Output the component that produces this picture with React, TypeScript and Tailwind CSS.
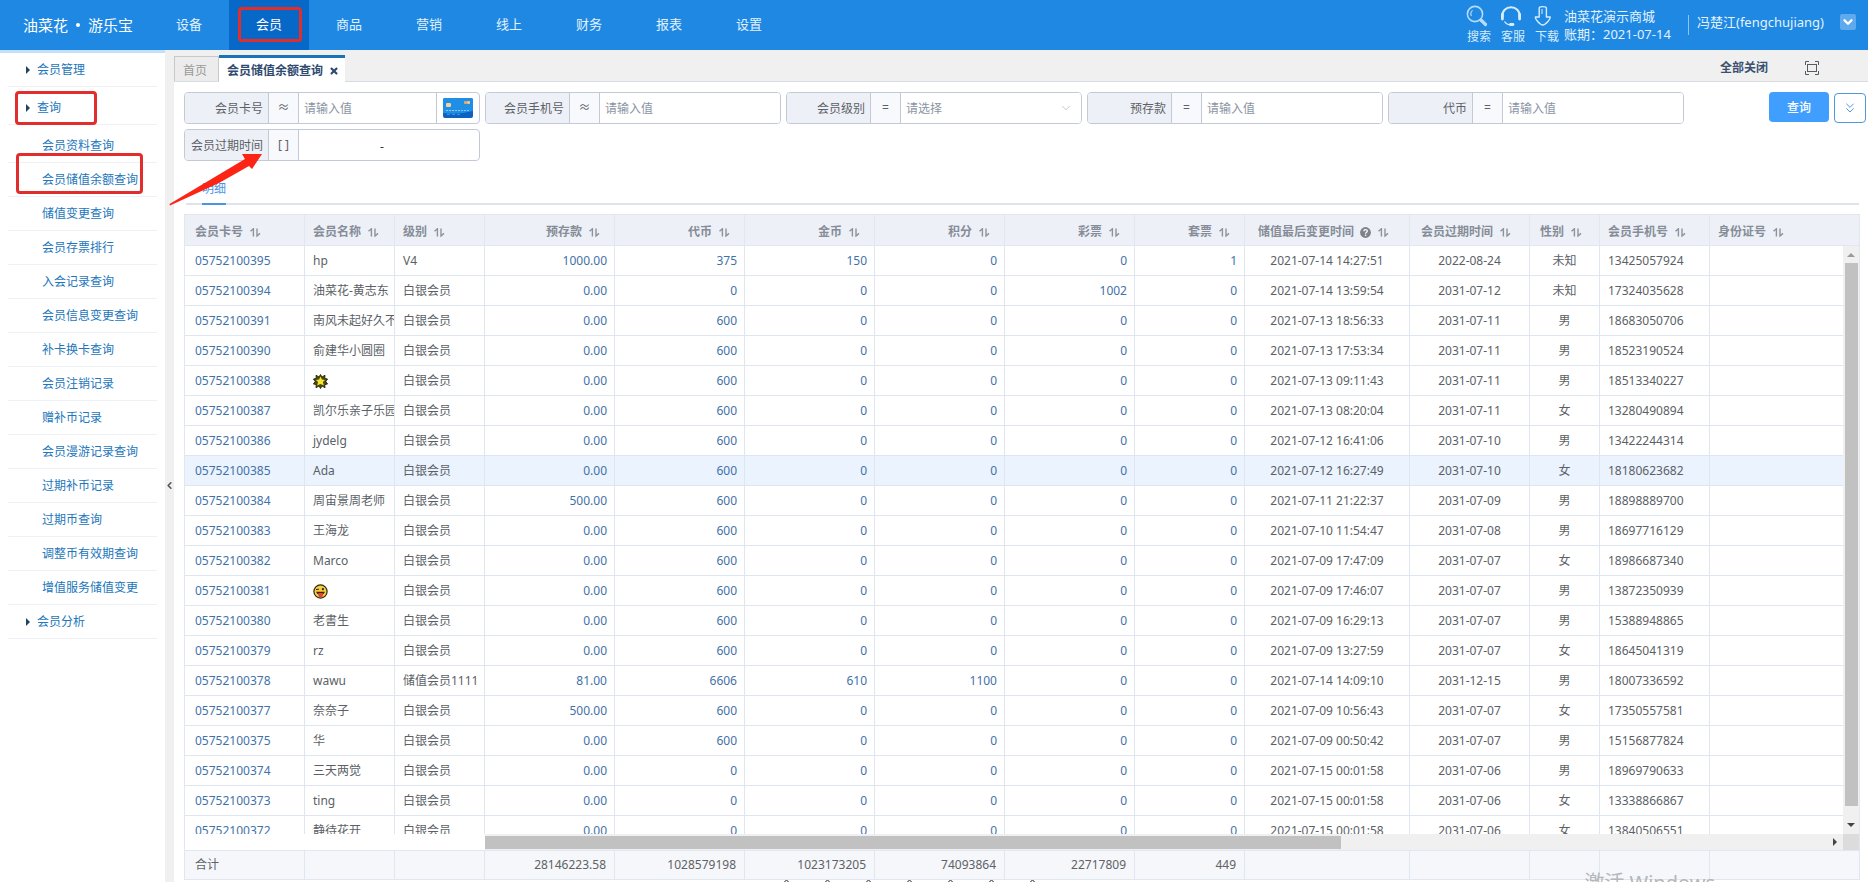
import React from 'react';
import { clsx } from 'clsx';
import { ChevronDown, ChevronLeft, ChevronsDown, X } from 'lucide-react';

type Align = 'left' | 'center' | 'right';

interface Column {
  title: string;
  align: Align;
  link?: boolean;
  help?: boolean;
  total?: string;
}

const NAV = ['设备', '会员', '商品', '营销', '线上', '财务', '报表', '设置'];

const QUERY_MENU = [
  '会员资料查询',
  '会员储值余额查询',
  '储值变更查询',
  '会员存票排行',
  '入会记录查询',
  '会员信息变更查询',
  '补卡换卡查询',
  '会员注销记录',
  '赠补币记录',
  '会员漫游记录查询',
  '过期补币记录',
  '过期币查询',
  '调整币有效期查询',
  '增值服务储值变更',
];

const COLUMNS: Column[] = [
  { title: '会员卡号', align: 'left', link: true, total: '合计' },
  { title: '会员名称', align: 'left' },
  { title: '级别', align: 'left' },
  { title: '预存款', align: 'right', link: true, total: '28146223.58' },
  { title: '代币', align: 'right', link: true, total: '1028579198' },
  { title: '金币', align: 'right', link: true, total: '1023173205' },
  { title: '积分', align: 'right', link: true, total: '74093864' },
  { title: '彩票', align: 'right', link: true, total: '22717809' },
  { title: '套票', align: 'right', link: true, total: '449' },
  { title: '储值最后变更时间', align: 'center', help: true },
  { title: '会员过期时间', align: 'center' },
  { title: '性别', align: 'center' },
  { title: '会员手机号', align: 'left' },
  { title: '身份证号', align: 'left' },
];

const L = '白银会员';

const ROWS: string[][] = [
  ['05752100395', 'hp', 'V4', '1000.00', '375', '150', '0', '0', '1', '2021-07-14 14:27:51', '2022-08-24', '未知', '13425057924'],
  ['05752100394', '油菜花-黄志东', L, '0.00', '0', '0', '0', '1002', '0', '2021-07-14 13:59:54', '2031-07-12', '未知', '17324035628'],
  ['05752100391', '南风未起好久不', L, '0.00', '600', '0', '0', '0', '0', '2021-07-13 18:56:33', '2031-07-11', '男', '18683050706'],
  ['05752100390', '俞建华小圆圈', L, '0.00', '600', '0', '0', '0', '0', '2021-07-13 17:53:34', '2031-07-11', '男', '18523190524'],
  ['05752100388', ':burst:', L, '0.00', '600', '0', '0', '0', '0', '2021-07-13 09:11:43', '2031-07-11', '男', '18513340227'],
  ['05752100387', '凯尔乐亲子乐园', L, '0.00', '600', '0', '0', '0', '0', '2021-07-13 08:20:04', '2031-07-11', '女', '13280490894'],
  ['05752100386', 'jydelg', L, '0.00', '600', '0', '0', '0', '0', '2021-07-12 16:41:06', '2031-07-10', '男', '13422244314'],
  ['05752100385', 'Ada', L, '0.00', '600', '0', '0', '0', '0', '2021-07-12 16:27:49', '2031-07-10', '女', '18180623682'],
  ['05752100384', '周宙景周老师', L, '500.00', '600', '0', '0', '0', '0', '2021-07-11 21:22:37', '2031-07-09', '男', '18898889700'],
  ['05752100383', '王海龙', L, '0.00', '600', '0', '0', '0', '0', '2021-07-10 11:54:47', '2031-07-08', '男', '18697716129'],
  ['05752100382', 'Marco', L, '0.00', '600', '0', '0', '0', '0', '2021-07-09 17:47:09', '2031-07-07', '女', '18986687340'],
  ['05752100381', ':wink:', L, '0.00', '600', '0', '0', '0', '0', '2021-07-09 17:46:07', '2031-07-07', '男', '13872350939'],
  ['05752100380', '老書生', L, '0.00', '600', '0', '0', '0', '0', '2021-07-09 16:29:13', '2031-07-07', '男', '15388948865'],
  ['05752100379', 'rz', L, '0.00', '600', '0', '0', '0', '0', '2021-07-09 13:27:59', '2031-07-07', '女', '18645041319'],
  ['05752100378', 'wawu', '储值会员1111', '81.00', '6606', '610', '1100', '0', '0', '2021-07-14 14:09:10', '2031-12-15', '男', '18007336592'],
  ['05752100377', '奈奈子', L, '500.00', '600', '0', '0', '0', '0', '2021-07-09 10:56:43', '2031-07-07', '女', '17350557581'],
  ['05752100375', '华', L, '0.00', '600', '0', '0', '0', '0', '2021-07-09 00:50:42', '2031-07-07', '男', '15156877824'],
  ['05752100374', '三天两觉', L, '0.00', '0', '0', '0', '0', '0', '2021-07-15 00:01:58', '2031-07-06', '男', '18969790633'],
  ['05752100373', 'ting', L, '0.00', '0', '0', '0', '0', '0', '2021-07-15 00:01:58', '2031-07-06', '女', '13338866867'],
  ['05752100372', '静待花开', L, '0.00', '0', '0', '0', '0', '0', '2021-07-15 00:01:58', '2031-07-06', '女', '13840506551'],
];

const ACTIVE_CARD = '05752100385';

function alignClass(align: Align) {
  return clsx(align === 'left' && 'text-left', align === 'center' && 'text-center', align === 'right' && 'text-right');
}

function SortIcon() {
  return (
    <svg className="inline-block ml-[7px] w-[11px] h-[9px]" viewBox="0 0 11 9" fill="none" stroke="#8d929c" strokeWidth="1.4">
      <path d="M0.5 3.2 L3.4 0.8 V8.5" />
      <path d="M7 0.5 V8 L10 5.4" />
    </svg>
  );
}

function HelpIcon() {
  return (
    <svg className="inline-block ml-[6px] w-[11px] h-[11px]" viewBox="0 0 11 11">
      <circle cx="5.5" cy="5.5" r="5.4" fill="#7d828c" />
      <path d="M3.8 4.3 C3.8 2.2 7.3 2.2 7.3 4.2 C7.3 5.3 5.6 5.4 5.6 6.8" fill="none" stroke="#fff" strokeWidth="1.3" />
      <rect x="4.9" y="7.6" width="1.4" height="1.3" fill="#fff" />
    </svg>
  );
}

function BurstIcon() {
  return (
    <svg className="inline-block w-[15px] h-[15px]" viewBox="0 0 15 15">
      <path
        d="M7.5 0.5 L9 3 L12 1.2 L11.8 4.4 L14.6 5 L12.8 7.5 L14.6 10 L11.8 10.6 L12 13.8 L9 12 L7.5 14.5 L6 12 L3 13.8 L3.2 10.6 L0.4 10 L2.2 7.5 L0.4 5 L3.2 4.4 L3 1.2 L6 3 Z"
        fill="#4a4a12"
        stroke="#1c1c08"
        strokeWidth="0.8"
      />
      <path d="M7.5 2.6 L8.9 5.6 L12 5.9 L9.9 8.1 L10.8 11.6 L7.5 9.9 L4.2 11.6 L5.1 8.1 L3 5.9 L6.1 5.6 Z" fill="#fbe52c" />
    </svg>
  );
}

function WinkIcon() {
  return (
    <svg className="inline-block w-[15px] h-[15px]" viewBox="0 0 15 15">
      <circle cx="7.5" cy="7.5" r="6.6" fill="#f6cf43" stroke="#33270c" strokeWidth="1.2" />
      <path d="M3 5.6 L6 5.2" stroke="#33270c" strokeWidth="1" />
      <circle cx="9.9" cy="5.2" r="1.1" fill="#33270c" />
      <path d="M3.2 7.8 H11.8 C11.4 9.8 10.2 10.8 7.5 10.8 C4.8 10.8 3.6 9.8 3.2 7.8 Z" fill="#33270c" />
      <path d="M5.4 9 H9.8 V11.6 C9.8 14.2 5.4 14.2 5.4 11.6 Z" fill="#e5452c" />
    </svg>
  );
}

function Cols() {
  return (
    <colgroup>
      <col className="w-[120px]" />
      <col className="w-[90px]" />
      <col className="w-[90px]" />
      <col className="w-[130px]" />
      <col className="w-[130px]" />
      <col className="w-[130px]" />
      <col className="w-[130px]" />
      <col className="w-[130px]" />
      <col className="w-[110px]" />
      <col className="w-[165px]" />
      <col className="w-[120px]" />
      <col className="w-[70px]" />
      <col className="w-[110px]" />
      <col />
    </colgroup>
  );
}

function HeaderTool({ label, children }: { label: string; children: React.ReactNode }) {
  return (
    <button type="button" className="flex flex-col items-center w-[34px] text-[12px] leading-[16px] text-[#d6ebfd]">
      <span className="flex items-center justify-center h-[22px] mb-[2px]">{children}</span>
      {label}
    </button>
  );
}

function Header() {
  return (
    <header className="flex items-center h-[50px] shrink-0 bg-[#1e88e2] text-[#e3f2ff] text-[13px]">
      <div className="flex items-center gap-[8px] w-[149px] shrink-0 pl-[23px] text-[15px] whitespace-nowrap text-white">
        <span>油菜花</span>
        <span className="w-[4px] h-[4px] rounded-full bg-white" />
        <span>游乐宝</span>
      </div>
      <nav className="flex h-full">
        {NAV.map((item) => (
          <a
            key={item}
            href="#"
            className={clsx(
              'relative flex items-center justify-center w-[80px] h-full',
              item === '会员' && 'bg-[#0768c8] text-white'
            )}
          >
            {item}
            {item === '会员' && (
              <span className="absolute left-[9px] top-[7px] w-[64px] h-[35px] border-3 border-[#e12d2b] rounded-[4px]" />
            )}
          </a>
        ))}
      </nav>
      <div className="flex items-center ml-auto h-full pr-[12px] whitespace-nowrap">
        <HeaderTool label="搜索">
          <svg className="w-[22px] h-[22px] mr-[4px]" viewBox="0 0 22 22" fill="none" stroke="#b5dcfa">
            <circle cx="9" cy="9" r="7.6" strokeWidth="1.6" />
            <path d="M5.4 11 A4.5 4.5 0 0 1 6.6 5.4" strokeWidth="1.2" />
            <path d="M15 15 L19.5 19.5" strokeWidth="3.2" strokeLinecap="round" />
          </svg>
        </HeaderTool>
        <HeaderTool label="客服">
          <svg className="w-[22px] h-[22px] mr-[4px]" viewBox="0 0 22 22" fill="none" stroke="#d6edff">
            <path d="M2.4 12 C1 -1 21 -1 19.6 12" strokeWidth="2" />
            <path d="M2.4 9.500 V14 M19.600 9.500 V14" strokeWidth="2.8" strokeLinecap="round" />
            <path d="M4.5 16.5 C6 19 8 19.8 11 19.8" strokeWidth="1.4" />
            <path d="M10.500 19.5 H13" strokeWidth="2.8" strokeLinecap="round" />
          </svg>
        </HeaderTool>
        <HeaderTool label="下载">
          <svg className="w-[18px] h-[22px] mr-[8px]" viewBox="0 0 18 22" fill="none" stroke="#d6edff" strokeWidth="1.4" strokeLinejoin="round">
            <path d="M5.2 12 V3 C5.2 1.2 12.400 1.2 12.400 3 V12 H16.2 C16.6 14 11.5 20 8.8 20 C6 20 1 14 1.4 12 Z" />
            <path d="M8 4 V9" strokeWidth="1" />
          </svg>
        </HeaderTool>
        <div className="w-[124px] text-[13px] leading-[18px]">
          <div>油菜花演示商城</div>
          <div>账期：2021-07-14</div>
        </div>
        <span className="w-px h-[20px] bg-[#8cc4f3]" />
        <span className="ml-[8px] mb-[4px] w-[143px] text-[13px]">冯楚江(fengchujiang)</span>
        <button type="button" aria-label="用户菜单" className="flex items-center justify-center w-[16px] h-[16px] mb-[6px] bg-[#5eaaec] rounded-[2px]">
          <ChevronDown size={14} strokeWidth={4} color="#fff" />
        </button>
      </div>
    </header>
  );
}

function MenuGroup({ label, marked, className }: { label: string; marked?: boolean; className: string }) {
  return (
    <a href="#" className={clsx('relative flex items-center gap-[7px] pl-[18px] border-b border-[#eef1f5]', className)}>
      <span className="w-0 h-0 border-y-4 border-y-transparent border-l-4 border-l-[#1f4560]" />
      {label}
      {marked && <span className="absolute left-[7px] top-[4px] w-[82px] h-[34px] border-3 border-[#e12d2b] rounded-[4px]" />}
    </a>
  );
}

function Sidebar() {
  return (
    <aside className="w-[165px] shrink-0 border-t-3 border-[#c4e0f8] px-[8px] bg-white text-[12px] text-[#2276bb] whitespace-nowrap">
      <MenuGroup label="会员管理" className="h-[34px]" />
      <MenuGroup label="查询" marked className="h-[38px] pt-[4px]" />
      <div className="pt-[4px]">
        {QUERY_MENU.map((item) => (
          <a key={item} href="#" className="relative flex items-center h-[34px] pl-[34px] border-b border-[#eef1f5]">
            {item}
            {item === '会员储值余额查询' && (
              <span className="absolute left-[8px] top-[-10px] w-[127px] h-[41px] border-3 border-[#e12d2b] rounded-[4px]" />
            )}
          </a>
        ))}
      </div>
      <MenuGroup label="会员分析" className="h-[34px]" />
    </aside>
  );
}

function TabBar() {
  return (
    <div className="flex items-end h-[32px] shrink-0 bg-[#f0f0f0] border-b border-[#d8dce2] text-[12px]">
      <button type="button" className="w-[45px] h-[25px] pt-[4px] pr-[3px] border border-b-0 border-[#c8c8c8] bg-[#ececec] text-[#999]">
        首页
      </button>
      <div className="flex items-center w-[126px] h-[27px] mb-[-1px] pl-[8px] pt-[2px] border-t-3 border-[#1874b6] bg-white font-bold text-[#2f4a70]">
        会员储值余额查询
        <button type="button" aria-label="关闭" className="ml-[6px]">
          <X size={10} strokeWidth={5} />
        </button>
      </div>
      <div className="flex items-center ml-auto h-[26px] pr-[49px] gap-[37px]">
        <button type="button" className="font-bold text-[#3c5170]">全部关闭</button>
        <button type="button" aria-label="全屏">
          <svg className="w-[14px] h-[14px]" viewBox="0 0 14 14" fill="none" stroke="#555c66" strokeWidth="1">
            <path d="M0.5 4 V0.5 H4 M10 0.5 H13.5 V4 M13.5 10 V13.5 H10 M4 13.5 H0.5 V10" />
            <rect x="2.5" y="3.5" width="9" height="7" />
          </svg>
        </button>
      </div>
    </div>
  );
}

interface FieldProps {
  id: string;
  label: string;
  op: string;
  children: React.ReactNode;
}

function Field({ id, label, op, children }: FieldProps) {
  return (
    <div className="relative flex w-[296px] h-[32px] border border-[#c3cad6] rounded-[4px] overflow-hidden bg-white">
      <label htmlFor={id} className="flex items-center justify-end w-[84px] pr-[5px] pt-[2px] shrink-0 border-r border-[#c3cad6] bg-[#edf1f7] text-[#5d6066]">
        {label}
      </label>
      <span className="flex items-center justify-center w-[30px] shrink-0 border-r border-[#c3cad6] bg-[#f8f9fd] text-[#5d6066]">
        {op}
      </span>
      {children}
    </div>
  );
}

const inputClass = 'flex-1 min-w-0 pl-[5px] pt-[2px] bg-white outline-none text-[#606266] placeholder:text-[#8a94a4]';

function Filters() {
  return (
    <form className="flex items-start pl-[10px] pr-[2px] pt-[10px] text-[12px]">
      <div className="flex flex-wrap flex-1 gap-[5px]">
        <Field id="card" label="会员卡号" op="≈">
          <input id="card" className={inputClass} placeholder="请输入值" />
          <button type="button" aria-label="读卡" className="flex items-center justify-center w-[43px] border-l border-[#c3cad6]">
            <svg className="w-[30px] h-[20px]" viewBox="0 0 30 20">
              <rect width="30" height="20" rx="2" fill="#0c62c0" />
              <path d="M0 2 Q0 0 2 0 H28 Q30 0 30 2 V13 Q15 17 0 15 Z" fill="#1f8fe6" />
              <rect x="3" y="5" width="5" height="4" rx="1" fill="#f2d49a" />
              <rect x="21" y="3" width="3" height="3" rx="1" fill="#f0a468" />
              <rect x="24" y="3" width="3" height="3" rx="1" fill="#f6c68a" />
              <path d="M3 12.5 H27" stroke="#8cc6f6" strokeWidth="1" strokeDasharray="2 1" />
              <path d="M4 16.5 H19" stroke="#3f8ed8" strokeWidth="1" strokeDasharray="3 2" />
            </svg>
          </button>
        </Field>
        <Field id="phone" label="会员手机号" op="≈">
          <input id="phone" className={inputClass} placeholder="请输入值" />
        </Field>
        <Field id="level" label="会员级别" op="=">
          <select id="level" className="flex-1 min-w-0 pl-[5px] pt-[2px] appearance-none bg-white outline-none text-[#8a94a4]">
            <option>请选择</option>
          </select>
          <ChevronDown className="absolute right-[8px] top-[8px] pointer-events-none" size={14} strokeWidth={1.5} color="#b8bfca" />
        </Field>
        <Field id="deposit" label="预存款" op="=">
          <input id="deposit" className={inputClass} placeholder="请输入值" />
        </Field>
        <Field id="token" label="代币" op="=">
          <input id="token" className={inputClass} placeholder="请输入值" />
        </Field>
        <Field id="expire-from" label="会员过期时间" op="[ ]">
          <div className="flex items-center flex-1 min-w-0 pr-[14px] pt-[4px] text-[#303133]">
            <input id="expire-from" className="flex-1 min-w-0 outline-none" />
            <span>-</span>
            <input aria-label="会员过期时间止" className="flex-1 min-w-0 outline-none" />
          </div>
        </Field>
      </div>
      <button type="button" className="w-[60px] h-[30px] pt-[2px] rounded-[4px] bg-[#409eff] text-white font-medium">查询</button>
      <button type="button" aria-label="展开" className="flex items-center justify-center w-[32px] h-[30px] ml-[5px] mt-px border border-[#5096d8] rounded-[4px]">
        <ChevronsDown size={16} strokeWidth={1.5} color="#5a94d6" />
      </button>
    </form>
  );
}

function cellContent(value: string | undefined, link?: boolean) {
  if (value === ':burst:') return <BurstIcon />;
  if (value === ':wink:') return <WinkIcon />;
  if (link) return <a href="#">{value}</a>;
  return value;
}

const tableClass = 'w-full table-fixed border-separate border-spacing-0';

function MemberTable() {
  return (
    <div className="flex flex-col flex-1 min-h-0 ml-[10px] mr-[8px] mt-[9px] border-x border-[#e1e7f0] text-[12px] leading-[18px]">
      <table className={tableClass}>
        <Cols />
        <thead>
          <tr>
            {COLUMNS.map((col, i) => (
              <th
                key={col.title}
                className={clsx(
                  'h-[32px] p-0 pt-[4px] border-y border-r border-[#e1e6ef] bg-[#edf1f7] font-bold text-[#868c98] whitespace-nowrap overflow-hidden',
                  i === 0 ? 'pl-[10px]' : col.align === 'left' && 'pl-[8px]',
                  col.align === 'right' && 'pr-[14px]',
                  col.align === 'center' && 'pr-[7px]',
                  i === COLUMNS.length - 1 && 'border-r-0',
                  alignClass(col.align)
                )}
              >
                {col.title}
                {col.help && <HelpIcon />}
                <SortIcon />
              </th>
            ))}
          </tr>
        </thead>
      </table>

      <div className="flex flex-1 min-h-0">
        <div className="flex flex-col flex-1 min-w-0">
          <div className="flex-1 min-h-0 overflow-hidden">
            <table className={tableClass}>
              <Cols />
              <tbody>
                {ROWS.map((row) => (
                  <tr key={row[0]} className={clsx(row[0] === ACTIVE_CARD && 'bg-[#eaf3fe]')}>
                    {COLUMNS.map((col, i) => (
                      <td
                        key={col.title}
                        className={clsx(
                          'h-[30px] p-0 border-b border-r border-[#dfe6ef] whitespace-nowrap overflow-hidden',
                          i === 0 ? 'pl-[10px]' : col.align === 'left' && 'pl-[8px]',
                          col.align === 'right' && 'pr-[7px]',
                          i === COLUMNS.length - 1 && 'border-r-0',
                          col.link ? 'text-[#3f72a8]' : 'text-[#5c5f66]',
                          alignClass(col.align)
                        )}
                      >
                        {cellContent(row[i], col.link)}
                      </td>
                    ))}
                  </tr>
                ))}
              </tbody>
            </table>
          </div>
          {/* horizontal scrollbar, starts after the fixed columns */}
          <div className="flex h-[16px] shrink-0">
            <div className="w-[300px] shrink-0" />
            <div className="flex items-center flex-1 bg-[#f0f0f0]">
              <div className="w-[63%] h-[13px] bg-[#c1c1c1]" />
              <span className="ml-auto mr-[6px] w-0 h-0 border-y-4 border-y-transparent border-l-4 border-l-[#444]" />
            </div>
          </div>
        </div>
        <div className="flex flex-col w-[16px] shrink-0 bg-[#f0f0f0]">
          <div className="flex items-center justify-center h-[17px]">
            <span className="w-0 h-0 border-x-4 border-x-transparent border-b-4 border-b-[#9a9a9a]" />
          </div>
          <div className="flex-1 ml-[2px] mr-px bg-[#c1c1c1]" />
          <div className="flex items-center justify-center h-[28px] pt-[9px]">
            <span className="w-0 h-0 border-x-4 border-x-transparent border-t-4 border-t-[#444]" />
          </div>
          <div className="h-[16px] bg-[#dcdcdc]" />
        </div>
      </div>

      <table className={tableClass}>
        <Cols />
        <tfoot>
          <tr>
            {COLUMNS.map((col, i) => (
              <td
                key={col.title}
                className={clsx(
                  'h-[30px] p-0 border-y border-r border-[#e1e7f0] bg-[#f5f7fb] text-[#606266] whitespace-nowrap',
                  i === 0 ? 'pl-[10px]' : 'pr-[8px]',
                  i === COLUMNS.length - 1 && 'border-r-0',
                  alignClass(col.align)
                )}
              >
                {col.total}
              </td>
            ))}
          </tr>
        </tfoot>
      </table>
    </div>
  );
}

// rounded tops of the next strip, only just scrolled into view
function NextStrip() {
  return (
    <div className="flex h-[2px] shrink-0 pl-[610px] overflow-hidden">
      {[0, 1, 2, 3, 4, 5, 6].map((n) => (
        <span key={n} className="w-[41px] shrink-0">
          <span className="block w-[5px] h-[6px] border border-[#444] rounded-full" />
        </span>
      ))}
    </div>
  );
}

export default function App() {
  return (
    <div className="relative flex flex-col h-screen overflow-hidden bg-white font-['Noto_Sans','Noto_Sans_CJK_SC',sans-serif]">
      <Header />
      <div className="flex flex-1 min-h-0">
        <Sidebar />
        <div className="flex items-center justify-center w-[9px] shrink-0 pt-[38px] bg-[#f0f0f0]">
          <ChevronLeft className="shrink-0" size={11} strokeWidth={3.5} color="#555" />
        </div>
        <main className="relative flex flex-col flex-1 min-w-0">
          <TabBar />
          <Filters />
          <div className="mt-[17px] ml-[12px] mr-[9px] pl-[16px] border-b-2 border-[#dfe4ec] text-[12px]">
            <button type="button" className="block h-[27px] pb-[3px] mb-[-2px] border-b-2 border-[#4a97e0] text-[#4a94e6]">明细</button>
          </div>
          <MemberTable />
          <NextStrip />

          {/* arrow pointing at the expiry filter */}
          <svg className="absolute left-[-5px] top-[102px] w-[94px] h-[54px] pointer-events-none" viewBox="0 0 94 54">
            <path d="M0.5 52 L76 7 L73 2 L93 2 L83 17 L80 14 L50 31 L1 53.5 Z" fill="#fb2415" />
          </svg>
        </main>
      </div>
      <div className="absolute right-[153px] bottom-0 h-[12px] overflow-hidden text-[20px] leading-[26px] text-[#b4b6ba] whitespace-nowrap pointer-events-none">
        激活 Windows
      </div>
    </div>
  );
}
